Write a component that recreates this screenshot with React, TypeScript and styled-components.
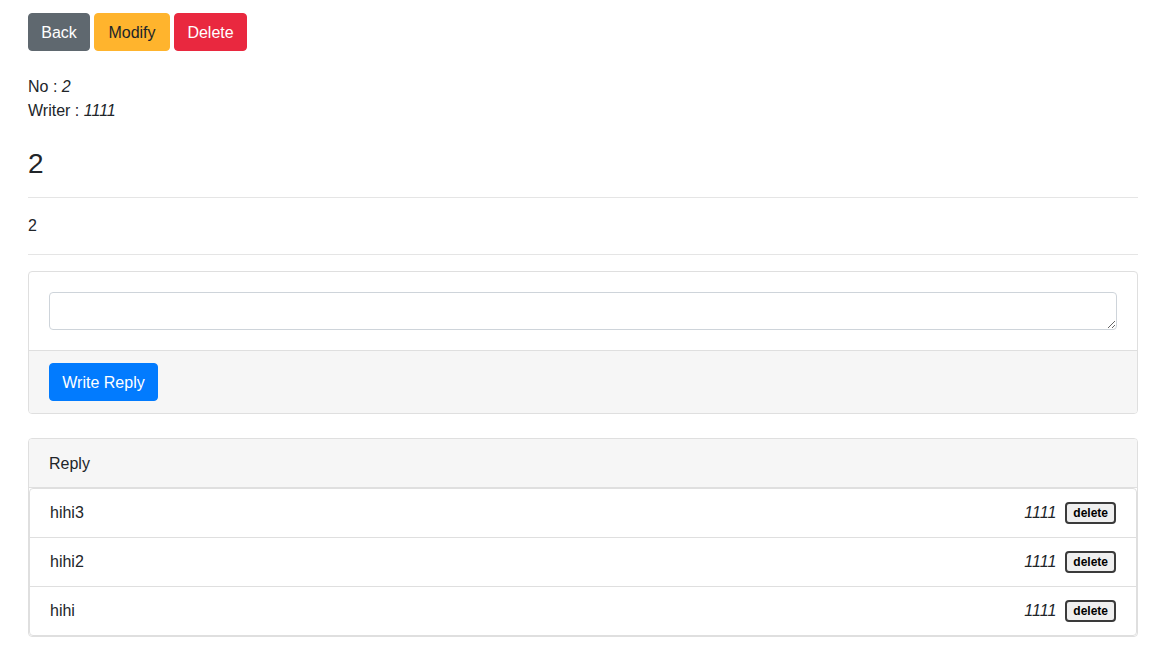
import { FC } from "react";
import styled, { createGlobalStyle } from "styled-components";

interface Reply {
  id: number;
  content: string;
  writer: string;
}

const replies: Reply[] = [
  { id: 3, content: "hihi3", writer: "1111" },
  { id: 2, content: "hihi2", writer: "1111" },
  { id: 1, content: "hihi", writer: "1111" },
];

const GlobalStyle = createGlobalStyle`
  body {
    margin: 0;
    font-family: "Liberation Sans", Arial, sans-serif;
    font-size: 16px;
    line-height: 1.5;
    color: #212529;
    background: #fff;
  }
`;

const App: FC = () => {
  return (
    <>
      <GlobalStyle />
      <Container>
        <Toolbar>
          <Button $bg="#5f686f" $color="#fff" $width="62px">Back</Button>
          <Button $bg="#ffb42d" $color="#212529" $width="76px">Modify</Button>
          <Button $bg="#e9283f" $color="#fff" $width="73px">Delete</Button>
        </Toolbar>
        <Meta>
          <div>
            No : <i>2</i>
          </div>
          <div>
            Writer : <i>1111</i>
          </div>
        </Meta>
        <Title>2</Title>
        <Rule />
        <Body>2</Body>
        <Rule />
        <Card>
          <CardBody>
            <TextArea rows={1} />
          </CardBody>
          <CardFooter>
            <Button $bg="#027bfe" $color="#fff" $width="109px">Write Reply</Button>
          </CardFooter>
        </Card>
        <ReplyCard>
          <CardHeader>Reply</CardHeader>
          <ReplyList>
            {replies.map((r) => (
              <ReplyItem key={r.id}>
                <span>{r.content}</span>
                <ReplyMeta>
                  <i>{r.writer}</i>
                  <SmallButton>delete</SmallButton>
                </ReplyMeta>
              </ReplyItem>
            ))}
          </ReplyList>
        </ReplyCard>
      </Container>
    </>
  );
};

const Container = styled.div`
  width: 1110px;
  margin-left: 28px;
  padding-top: 13px;
`;

const Toolbar = styled.div`
  display: flex;
  gap: 4px;
`;

const Button = styled.button<{ $bg: string; $color: string; $width: string }>`
  width: ${(p) => p.$width};
  height: 38px;
  padding: 2px 0 0;
  border: 1px solid ${(p) => p.$bg};
  border-radius: 4px;
  background: ${(p) => p.$bg};
  color: ${(p) => p.$color};
  font-family: inherit;
  font-size: 16px;
  line-height: 1.5;
  text-align: center;
  cursor: pointer;
`;

const Meta = styled.div`
  margin-top: 24px;
  margin-bottom: 24px;
`;

const Title = styled.h3`
  margin: 0 0 8px;
  font-size: 28px;
  font-weight: 500;
  line-height: 1.2;
`;

const Rule = styled.hr`
  margin: 16px 0;
  border: 0;
  border-top: 1px solid #e5e5e5;
`;

const Body = styled.div`
  line-height: 24px;
  margin: 4px 0;
`;

const Card = styled.div`
  display: flex;
  flex-direction: column;
  border: 1px solid #dfdfdf;
  border-radius: 4px;
  overflow: hidden;
`;

const CardBody = styled.div`
  padding: 20px;
`;

const TextArea = styled.textarea`
  display: block;
  box-sizing: border-box;
  width: 100%;
  height: 38px;
  padding: 6px 12px;
  border: 1px solid #ced4da;
  border-radius: 4px;
  font-family: inherit;
  font-size: 16px;
  resize: vertical;
`;

const CardFooter = styled.div`
  padding: 12px 20px;
  background: #f6f6f6;
  border-top: 1px solid #dfdfdf;
`;

const ReplyCard = styled(Card)`
  margin-top: 24px;
`;

const CardHeader = styled.div`
  padding: 13px 20px 11px;
  background: #f6f6f6;
  border-bottom: 1px solid #dfdfdf;
`;

const ReplyList = styled.ul`
  margin: 0;
  padding: 0;
  list-style: none;
  border: 1px solid #dfdfdf;
  border-radius: 4px;
`;

const ReplyItem = styled.li`
  display: flex;
  justify-content: space-between;
  align-items: center;
  padding: 12px 20px;
  & + & {
    border-top: 1px solid #dfdfdf;
  }
`;

const ReplyMeta = styled.span`
  display: flex;
  align-items: center;
  gap: 9px;
`;

const SmallButton = styled.button`
  height: 22px;
  padding: 0 6px;
  border: 2px solid #3a3a3a;
  border-radius: 4px;
  background: #efefef;
  color: #000;
  font-family: "Liberation Sans", Arial, sans-serif;
  font-size: 12px;
  font-weight: 700;
  line-height: 1;
`;

export default App;
